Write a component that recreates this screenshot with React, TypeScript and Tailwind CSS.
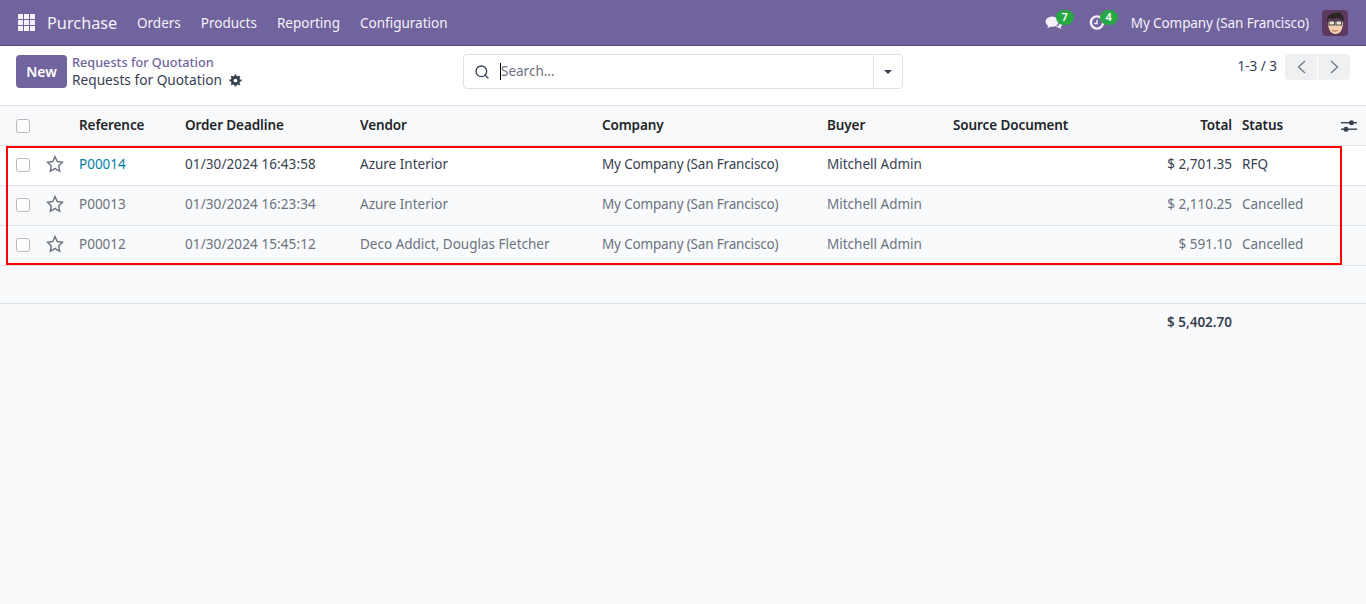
import { Search } from "lucide-react"

const menus = ["Orders", "Products", "Reporting", "Configuration"]

const rows = [
  { id: "P00014", deadline: "01/30/2024 16:43:58", vendor: "Azure Interior", total: "$ 2,701.35", status: "RFQ" },
  { id: "P00013", deadline: "01/30/2024 16:23:34", vendor: "Azure Interior", total: "$ 2,110.25", status: "Cancelled" },
  { id: "P00012", deadline: "01/30/2024 15:45:12", vendor: "Deco Addict, Douglas Fletcher", total: "$ 591.10", status: "Cancelled" },
]

function Badge({ n }: { n: number }) {
  return (
    <span className="absolute -top-[5px] left-[11px] flex h-[15px] w-[18px] items-center justify-center rounded-full bg-[#28a745] pb-px text-[11px] font-semibold text-white">
      {n}
    </span>
  )
}

function Avatar() {
  return (
    <svg width="26" height="26" viewBox="0 0 26 26" className="rounded-[4px]">
      <rect width="26" height="26" fill="#5c3a5e" />
      <path d="M6 12c0 8 3 12 7.500 12S21 20 21 12z" fill="#f5cfae" />
      <path d="M5 12C4 6 9 3 14 3c2 0 3-1 5-1-1 1 0 2 1 3 2 2 2 4 1 7-1-3-3-4-5-4-3 1-7 1-9 0-1 1-1 3-2 4z" fill="#2b2523" />
      <rect x="7" y="11" width="5.500" height="4" fill="#e8e4dc" stroke="#444" strokeWidth="1" />
      <rect x="14" y="11" width="5.500" height="4" fill="#e8e4dc" stroke="#444" strokeWidth="1" />
      <path d="M10 20c2 1.500 4 1.500 6 0" fill="none" stroke="#a8604c" strokeWidth="1" />
    </svg>
  )
}

function Checkbox() {
  return <span className="block h-[14px] w-[14px] rounded-[3px] border border-[#b5b9be] bg-white" />
}

function StarIcon() {
  return (
    <svg width="18" height="18" viewBox="0 0 18 18" fill="none" stroke="#6b7280" strokeWidth="1.400" strokeLinejoin="miter">
      <path d="M9 1.600l2.300 4.900 5.300.7-3.900 3.700 1 5.300L9 13.600l-4.700 2.600 1-5.300L1.400 7.200l5.300-.7z" />
    </svg>
  )
}

export default function App() {
  return (
    <div className="relative flex min-h-[604px] flex-col bg-[#f9fafb] font-['Noto_Sans',sans-serif] text-[13.5px] text-[#374151]">
      <header className="flex h-[46px] items-center border-b border-[#5f4e85] bg-[#71639e] pl-[18px] pr-[18px] text-[#f4f1f8]">
        <svg width="17" height="17" viewBox="0 0 17 17" fill="#f4f1f8">
          <rect x="0" y="0" width="5" height="5" />
          <rect x="6" y="0" width="5" height="5" />
          <rect x="12" y="0" width="5" height="5" />
          <rect x="0" y="6" width="5" height="5" />
          <rect x="6" y="6" width="5" height="5" />
          <rect x="12" y="6" width="5" height="5" />
          <rect x="0" y="12" width="5" height="5" />
          <rect x="6" y="12" width="5" height="5" />
          <rect x="12" y="12" width="5" height="5" />
        </svg>
        <span className="ml-[12px] w-[90px] pt-[2px] text-[16.300px]">Purchase</span>
        <nav className="flex gap-[20px] pt-[2px]">
          {menus.map((m) => (
            <span key={m}>{m}</span>
          ))}
        </nav>
        <div className="ml-auto flex items-center">
          <span className="relative mr-[26px] block h-[15px] w-[18px]">
            <svg width="18" height="15" viewBox="0 0 18 16" fill="#f4f1f8">
              <ellipse cx="7" cy="7" rx="7" ry="5.500" />
              <path d="M3 10l-1 4 5-2.500z" />
              <path d="M15 5c2 1 3 3 3 4.500 0 1.500-1 2.500-2 3l1 2.500-4-2c-1 0-2 0-3-.5 4 0 6-3 5-7.500z" />
            </svg>
            <Badge n={7} />
          </span>
          <span className="relative mr-[26px] block h-[15px] w-[16px]">
            <svg width="16" height="15" viewBox="0 0 16 16" fill="none" stroke="#f4f1f8">
              <circle cx="8" cy="8" r="6.500" strokeWidth="2.500" />
              <path d="M8 5v4H5" strokeWidth="1.500" />
            </svg>
            <Badge n={4} />
          </span>
          <span className="pt-[2px] tracking-[-0.1px]">My Company (San Francisco)</span>
          <span className="ml-[13px] block h-[26px]">
            <Avatar />
          </span>
        </div>
      </header>

      <div className="flex h-[59px] bg-white pl-[16px] pr-[16px] pt-[8px]">
        <button className="mt-px h-[33px] w-[51px] rounded-[4px] bg-[#71639e] text-[14px] font-semibold text-white">New</button>
        <div className="ml-[5px] -mt-px w-[391px] leading-[18px]">
          <div className="text-[12.700px] font-medium text-[#71639e]">Requests for Quotation</div>
          <div className="flex items-center gap-[7px]">
            <span className="text-[13.700px]">Requests for Quotation</span>
            <svg width="13" height="13" viewBox="0 0 14 14">
              <circle cx="7" cy="7" r="3.500" fill="none" stroke="#374151" strokeWidth="3" />
              <path d="M7 .5v13M.5 7h13M2.400 2.400l9.200 9.200M11.600 2.400l-9.200 9.200" stroke="#374151" strokeWidth="2" />
              <circle cx="7" cy="7" r="2" fill="#fff" />
            </svg>
          </div>
        </div>
        <div className="flex h-[35px] w-[440px] items-center rounded-[4px] border border-[#dee2e6] bg-white">
          <Search size={16} strokeWidth={2} className="ml-[10px] text-[#374151]" />
          <span className="ml-[10px] h-[17px] w-px bg-black" />
          <span className="text-[#6b7280]">Search...</span>
          <span className="ml-auto flex h-full w-[29px] items-center justify-center border-l border-[#dee2e6]">
            <span className="h-0 w-0 border-x-[4px] border-t-[4px] border-x-transparent border-t-[#374151]" />
          </span>
        </div>
        <div className="ml-auto flex h-[26px] items-center">
          <span className="pb-px">1-3 / 3</span>
          <div className="ml-[8px] flex gap-px">
            <span className="flex h-[26px] w-[32px] items-center justify-center rounded-l-[4px] bg-[#eef0f2]">
              <svg width="9" height="14" viewBox="0 0 9 14" fill="none" stroke="#6b7280" strokeWidth="1.200">
                <path d="M8 1L1.500 7 8 13" />
              </svg>
            </span>
            <span className="flex h-[26px] w-[32px] items-center justify-center rounded-r-[4px] bg-[#eef0f2]">
              <svg width="9" height="14" viewBox="0 0 9 14" fill="none" stroke="#6b7280" strokeWidth="1.200">
                <path d="M1 1l6.500 6L1 13" />
              </svg>
            </span>
          </div>
        </div>
      </div>

      <table className="w-full table-fixed border-collapse">
        <colgroup>
          <col className="w-[38px]" />
          <col className="w-[33px]" />
          <col className="w-[106px]" />
          <col className="w-[175px]" />
          <col className="w-[242px]" />
          <col className="w-[225px]" />
          <col className="w-[126px]" />
          <col className="w-[155px]" />
          <col className="w-[134px]" />
          <col className="w-[96px]" />
          <col />
        </colgroup>
        <thead>
          <tr className="h-[40px] border-y border-[#dee2e6] bg-[#f8f9fa] text-left text-[#212529]">
            <th className="pl-[16px]">
              <Checkbox />
            </th>
            <th />
            <th className="px-2 font-semibold tracking-[-0.1px]">Reference</th>
            <th className="px-2 font-semibold tracking-[-0.1px]">Order Deadline</th>
            <th className="px-2 font-semibold tracking-[-0.1px]">Vendor</th>
            <th className="px-2 font-semibold tracking-[-0.1px]">Company</th>
            <th className="px-2 font-semibold tracking-[-0.1px]">Buyer</th>
            <th className="px-2 font-semibold tracking-[-0.1px]">Source Document</th>
            <th className="pr-[2px] text-right font-semibold tracking-[-0.1px]">Total</th>
            <th className="px-2 font-semibold tracking-[-0.1px]">Status</th>
            <th className="pl-[11px]">
              <svg width="16" height="14" viewBox="0 0 16 14" fill="#374151">
                <rect x="0" y="3" width="16" height="1.400" />
                <rect x="0" y="9.500" width="16" height="1.400" />
                <circle cx="10.500" cy="3.700" r="2.500" />
                <circle cx="5" cy="10.200" r="2.500" />
              </svg>
            </th>
          </tr>
        </thead>
        <tbody>
          {rows.map((r, i) => (
            <tr key={r.id} className={`h-[40px] border-b border-[#dee2e6] ${i === 0 ? "bg-white text-[#374151]" : "bg-[#f9fafb] text-[#6b7280]"}`}>
              <td className="pb-[2px] pl-[16px]">
                <Checkbox />
              </td>
              <td className="pb-[4px] pl-[8px]">
                <StarIcon />
              </td>
              <td className={`px-2 pb-[2px] ${i === 0 ? "text-[#0180a5]" : ""}`}>{r.id}</td>
              <td className="px-2 pb-[2px] tracking-[0.1px]">{r.deadline}</td>
              <td className="px-2 pb-[2px]">{r.vendor}</td>
              <td className="px-2 pb-[2px] tracking-[-0.17px]">My Company (San Francisco)</td>
              <td className="px-2 pb-[2px]">Mitchell Admin</td>
              <td className="px-2" />
              <td className="pb-[2px] pr-[2px] text-right">{r.total}</td>
              <td className="px-2 pb-[2px]">{r.status}</td>
              <td />
            </tr>
          ))}
          <tr className="h-[38px] border-b border-[#dee2e6]">
            <td colSpan={11} />
          </tr>
        </tbody>
        <tfoot>
          <tr className="h-[37px] font-semibold">
            <td colSpan={8} />
            <td className="pr-[2px] text-right">$ 5,402.70</td>
            <td colSpan={2} />
          </tr>
        </tfoot>
      </table>

      {/* annotation box from the screenshot */}
      <div className="pointer-events-none absolute left-[6px] top-[146px] h-[119px] w-[1336px] border-2 border-[#ff0000]" />
    </div>
  )
}
